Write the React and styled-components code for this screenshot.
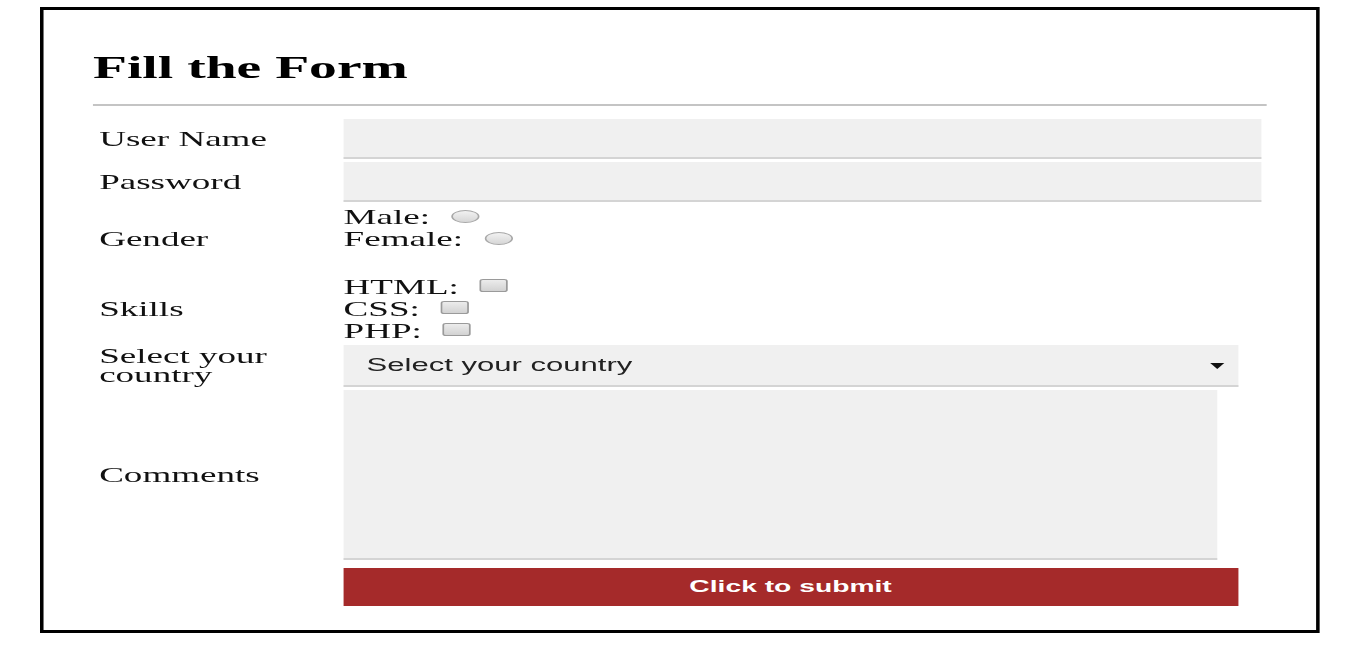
import styled, { createGlobalStyle } from "styled-components";

// The reference is a horizontally stretched capture of a ~725px wide page,
// so the frame is laid out at its natural width and stretched on the x axis.
const STRETCH = 1.765;

const GlobalStyle = createGlobalStyle`
  html, body {
    margin: 0;
    padding: 0;
    background: #fff;
  }
  body {
    padding: 7px 0 0 40px;
    font-family: "Liberation Serif", "Times New Roman", serif;
    color: #111;
  }
`;

const genders = ["Male", "Female"];
const skills = ["HTML", "CSS", "PHP"];

const App = () => {
  return (
    <>
      <GlobalStyle />
      <Frame>
        <Title>Fill the Form</Title>
        <Rule />
        <FormGrid>
          <Label>User Name</Label>
          <TextInput type="text" />

          <Label>Password</Label>
          <TextInput type="password" />

          <Label>Gender</Label>
          <Options>
            {genders.map((g) => (
              <OptionLine key={g}>
                {g}:<Radio type="radio" name="gender" />
              </OptionLine>
            ))}
            <OptionLine />
          </Options>

          <Label>Skills</Label>
          <Options>
            {skills.map((s) => (
              <OptionLine key={s}>
                {s}:<Check type="checkbox" />
              </OptionLine>
            ))}
          </Options>

          <Label $tight>Select your country</Label>
          <SelectWrap>
            <Select defaultValue="">
              <option value="">Select your country</option>
            </Select>
          </SelectWrap>

          <Label>Comments</Label>
          <Comments />

          <span />
          <SubmitButton type="button">Click to submit</SubmitButton>
        </FormGrid>
      </Frame>
    </>
  );
};

export default App;

const Frame = styled.div`
  width: 725px;
  height: 626px;
  box-sizing: border-box;
  border-style: solid;
  border-color: #000;
  border-width: 3px 2px;
  padding: 40px 28px 0 28px;
  transform: scaleX(${STRETCH});
  transform-origin: 0 0;
`;

const Title = styled.h1`
  margin: 0;
  font-family: "Liberation Serif", "Times New Roman", serif;
  font-weight: bold;
  font-size: 31.5px;
  line-height: 36px;
  color: #000;
`;

const Rule = styled.div`
  margin-top: 18px;
  border-top: 2px solid #c4c4c4;
`;

const FormGrid = styled.div`
  display: grid;
  grid-template-columns: 142px 1fr;
  row-gap: 3px;
  margin-top: 13px;
`;

const Label = styled.div`
  align-self: center;
  padding-left: 3.5px;
  padding-right: 4px;
  font-size: 21px;
  line-height: ${({ $tight }) => ($tight ? "19px" : "22px")};
  color: #111;
`;

const TextInput = styled.input`
  width: 520px;
  height: 40px;
  box-sizing: border-box;
  border: none;
  border-bottom: 2px solid #d4d4d4;
  background: #f0f0f0;
  outline: none;
`;

const Options = styled.div`
  display: flex;
  flex-direction: column;
  padding-top: 1px;
`;

const OptionLine = styled.div`
  height: 22px;
  display: flex;
  align-items: center;
  font-size: 21px;
  line-height: 22px;
  color: #111;
`;

const Radio = styled.input`
  appearance: none;
  margin: 0 0 2px 12px;
  width: 16px;
  height: 13px;
  border-radius: 50%;
  border: 1px solid #a8a8a8;
  background: linear-gradient(#f2f2f2, #d6d6d6);
  box-sizing: border-box;
`;

const Check = styled.input`
  appearance: none;
  margin: 0 0 4px 12px;
  width: 16px;
  height: 13px;
  border-radius: 2px;
  border: 1px solid #9a9a9a;
  background: linear-gradient(#ececec, #d2d2d2);
  box-sizing: border-box;
`;

const SelectWrap = styled.div`
  position: relative;
  width: 506.5px;

  &::after {
    content: "";
    position: absolute;
    right: 7.5px;
    top: 18px;
    border-left: 4px solid transparent;
    border-right: 4px solid transparent;
    border-top: 6px solid #111;
    pointer-events: none;
  }
`;

const Select = styled.select`
  appearance: none;
  width: 100%;
  height: 42px;
  box-sizing: border-box;
  border: none;
  border-bottom: 2px solid #d4d4d4;
  border-radius: 0;
  background: #f0f0f0;
  padding: 0 0 0 13px;
  font-family: "Liberation Sans", Arial, sans-serif;
  font-size: 17.6px;
  color: #222;
  outline: none;
`;

const Comments = styled.textarea`
  display: block;
  width: 494.6px;
  height: 170px;
  box-sizing: border-box;
  border: none;
  border-bottom: 2px solid #d4d4d4;
  background: #f0f0f0;
  resize: none;
  outline: none;
`;

const SubmitButton = styled.button`
  margin-top: 5px;
  width: 506.5px;
  height: 38px;
  border: none;
  background: #a52a2a;
  color: #fff;
  font-family: "Liberation Sans", Arial, sans-serif;
  font-weight: bold;
  font-size: 16px;
  cursor: pointer;
`;
